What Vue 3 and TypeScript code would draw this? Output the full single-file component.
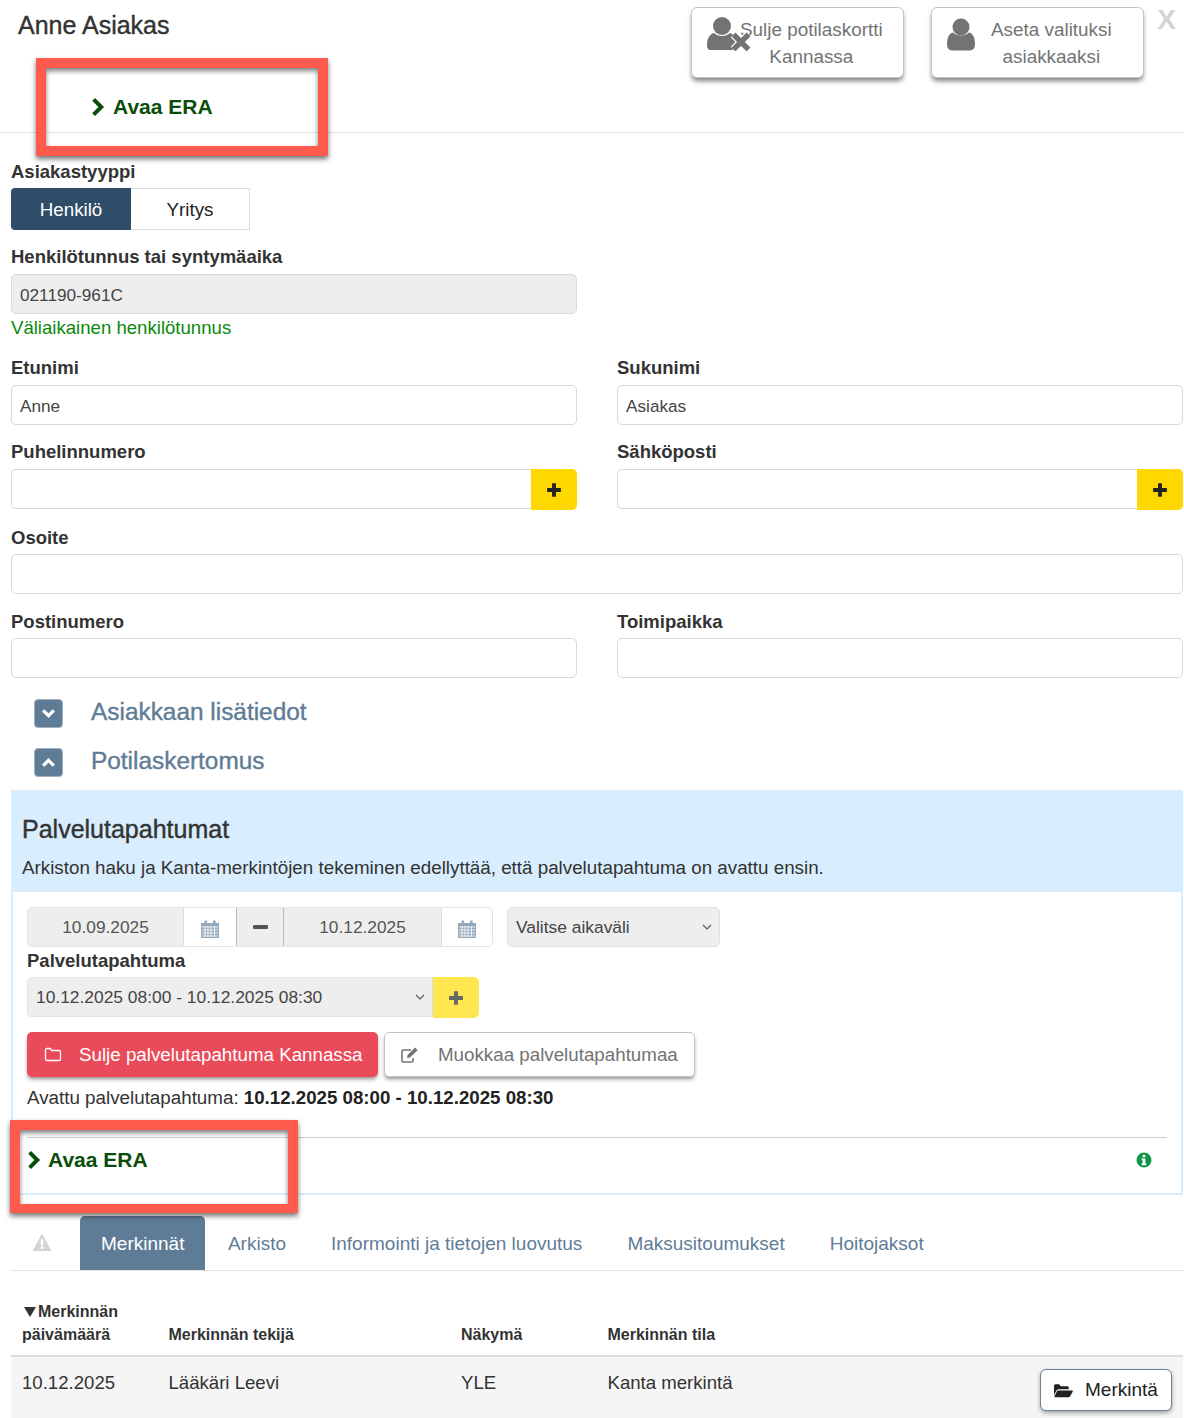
<script setup lang="ts">
const tabs: string[] = ['Arkisto', 'Informointi ja tietojen luovutus', 'Maksusitoumukset', 'Hoitojaksot']
</script>

<template>
  <div class="page">
    <header class="top">
      <div class="top-left">
        <h1 class="name">Anne Asiakas</h1>
        <a class="era era-top">
          <svg class="chev" viewBox="0 0 14 20"><path d="M3 3l7 7-7 7" fill="none" stroke="currentColor" stroke-width="3.6" /></svg>
          Avaa ERA
        </a>
      </div>
      <div class="top-actions">
        <button class="big-btn">
          <svg class="user-x" viewBox="0 0 44 34">
            <circle cx="15" cy="9" r="9" fill="#737373" />
            <path d="M0 28c0-7 3-11 7-12 2 2 5 3 8 3s6-1 8-3c3 1 5 3 6 6l-3 11H4c-3 0-4-2-4-5z" fill="#737373" />
            <path d="M26.500 17.500l15 15M41.500 17.500l-15 15" stroke="#fff" stroke-width="8" />
            <path d="M26.500 17.500l15 15M41.500 17.500l-15 15" stroke="#737373" stroke-width="5.400" />
          </svg>
          <span>Sulje potilaskortti<br />Kannassa</span>
        </button>
        <button class="big-btn">
          <svg class="user" viewBox="0 0 28 32">
            <circle cx="14" cy="8.500" r="8.500" fill="#737373" />
            <path d="M0 26c0-7 2-11 6-12 2 2 5 3 8 3s6-1 8-3c4 1 6 5 6 12 0 3-2 6-5 6H5c-3 0-5-3-5-6z" fill="#737373" />
          </svg>
          <span>Aseta valituksi<br />asiakkaaksi</span>
        </button>
        <span class="close-x">X</span>
      </div>
    </header>

    <section class="form">
      <label class="lbl lbl-first">Asiakastyyppi</label>
      <div class="toggle">
        <span class="tg on">Henkilö</span>
        <span class="tg">Yritys</span>
      </div>

      <label class="lbl lbl-hetu">Henkilötunnus tai syntymäaika</label>
      <div class="half">
        <div class="inp disabled">021190-961C</div>
      </div>
      <div class="green">Väliaikainen henkilötunnus</div>

      <div class="grid g1">
        <div><label class="lbl">Etunimi</label><div class="inp">Anne</div></div>
        <div><label class="lbl">Sukunimi</label><div class="inp">Asiakas</div></div>
      </div>
      <div class="grid g2">
        <div>
          <label class="lbl">Puhelinnumero</label>
          <div class="inp-add"><div class="inp grow"></div><span class="add"><svg viewBox="0 0 14 14"><path d="M7 1v12M1 7h12" stroke="#222" stroke-width="3.400" /></svg></span></div>
        </div>
        <div>
          <label class="lbl">Sähköposti</label>
          <div class="inp-add"><div class="inp grow"></div><span class="add"><svg viewBox="0 0 14 14"><path d="M7 1v12M1 7h12" stroke="#222" stroke-width="3.400" /></svg></span></div>
        </div>
      </div>
      <label class="lbl lbl-addr">Osoite</label>
      <div class="inp"></div>
      <div class="grid g3">
        <div><label class="lbl">Postinumero</label><div class="inp"></div></div>
        <div><label class="lbl">Toimipaikka</label><div class="inp"></div></div>
      </div>

      <div class="coll c1">
        <span class="coll-ic"><svg viewBox="0 0 14 10"><path d="M2 2l5 5 5-5" fill="none" stroke="#fff" stroke-width="3" /></svg></span>
        <span class="coll-t">Asiakkaan lisätiedot</span>
      </div>
      <div class="coll c2">
        <span class="coll-ic"><svg viewBox="0 0 14 10"><path d="M2 8l5-5 5 5" fill="none" stroke="#fff" stroke-width="3" /></svg></span>
        <span class="coll-t">Potilaskertomus</span>
      </div>

      <div class="panel">
        <div class="panel-head">
          <h2>Palvelutapahtumat</h2>
          <p>Arkiston haku ja Kanta-merkintöjen tekeminen edellyttää, että palvelutapahtuma on avattu ensin.</p>
        </div>
        <div class="panel-body">
          <div class="date-row">
            <div class="dates">
              <span class="d-val v1">10.09.2025</span>
              <span class="d-ic i1">
                <svg viewBox="0 0 18 18"><path d="M0 3h18v15H0z" fill="#93a9bd" /><rect x="3.500" y="0.500" width="2.600" height="4" fill="#93a9bd" /><rect x="12" y="0.500" width="2.600" height="4" fill="#93a9bd" /><path d="M1 7h16M1 10h16M1 13h16M1 16h16M4 6v11M7 6v11M10 6v11M13.500 6v11" stroke="#fff" stroke-width="0.800" fill="none" /></svg>
              </span>
              <span class="d-minus"><i></i></span>
              <span class="d-val v2">10.12.2025</span>
              <span class="d-ic i2">
                <svg viewBox="0 0 18 18"><path d="M0 3h18v15H0z" fill="#93a9bd" /><rect x="3.500" y="0.500" width="2.600" height="4" fill="#93a9bd" /><rect x="12" y="0.500" width="2.600" height="4" fill="#93a9bd" /><path d="M1 7h16M1 10h16M1 13h16M1 16h16M4 6v11M7 6v11M10 6v11M13.500 6v11" stroke="#fff" stroke-width="0.800" fill="none" /></svg>
              </span>
            </div>
            <div class="sel sel-range">
              <span>Valitse aikaväli</span>
              <svg class="caret" viewBox="0 0 10 6"><path d="M1 1l4 4 4-4" fill="none" stroke="#555" stroke-width="1.100" /></svg>
            </div>
          </div>

          <label class="lbl lbl-pt">Palvelutapahtuma</label>
          <div class="pt-row">
            <div class="sel sel-pt">
              <span>10.12.2025 08:00 - 10.12.2025 08:30</span>
              <svg class="caret" viewBox="0 0 10 6"><path d="M1 1l4 4 4-4" fill="none" stroke="#555" stroke-width="1.100" /></svg>
            </div>
            <span class="add add-soft"><svg viewBox="0 0 14 14"><path d="M7 1v12M1 7h12" stroke="#666" stroke-width="3.400" /></svg></span>
          </div>

          <div class="act-row">
            <button class="red-btn">
              <svg class="folder" viewBox="0 0 18 15"><path d="M1.500 3c0-1 .6-1.500 1.400-1.500h3.300l1.500 2h7.400c.8 0 1.400.6 1.400 1.400v7.200c0 .8-.6 1.400-1.400 1.400H2.900c-.8 0-1.400-.6-1.400-1.400z" fill="none" stroke="#fff" stroke-width="1.300" /></svg>
              Sulje palvelutapahtuma Kannassa
            </button>
            <button class="white-btn">
              <svg class="edit" viewBox="0 0 20 18"><path d="M13 12v2.500c0 .9-.7 1.500-1.500 1.500h-8C2.700 16 2 15.400 2 14.500v-9C2 4.700 2.700 4 3.500 4H11" fill="none" stroke="#737373" stroke-width="1.600" /><path d="M7 12l.6-3L15 1.600l2.600 2.600L10 11.500z" fill="#737373" /></svg>
              Muokkaa palvelutapahtumaa
            </button>
          </div>
          <p class="opened">Avattu palvelutapahtuma: <b>10.12.2025 08:00 - 10.12.2025 08:30</b></p>
          <hr class="rule" />
          <div class="era-row">
            <a class="era">
              <svg class="chev" viewBox="0 0 14 20"><path d="M3 3l7 7-7 7" fill="none" stroke="currentColor" stroke-width="3.600" /></svg>
              Avaa ERA
            </a>
            <svg class="info" viewBox="0 0 16 16"><circle cx="8" cy="8" r="7.500" fill="#0d9648" /><rect x="6.600" y="2.800" width="2.800" height="2.500" fill="#fff" /><path d="M5.600 6.500h3.800v5h1v1.700H5.600v-1.700h1V8.200h-1z" fill="#fff" /></svg>
          </div>
        </div>
      </div>

      <nav class="tabs">
        <span class="warn">
          <svg viewBox="0 0 20 18"><path d="M10 .5L19.500 18H.5z" fill="#d4d4d4" /><rect x="8.800" y="6" width="2.400" height="6.500" fill="#fff" /><rect x="8.800" y="13.500" width="2.400" height="2.500" fill="#fff" /></svg>
        </span>
        <span class="tab active">Merkinnät</span>
        <span v-for="t in tabs" :key="t" class="tab">{{ t }}</span>
      </nav>

      <div class="thead">
        <div class="c-date"><svg class="tri" viewBox="0 0 12 10"><path d="M0 0h12L6 10z" fill="#333" /></svg>Merkinnän päivämäärä</div>
        <div class="c-who">Merkinnän tekijä</div>
        <div class="c-view">Näkymä</div>
        <div class="c-state">Merkinnän tila</div>
      </div>
      <div class="trow">
        <div class="c-date">10.12.2025</div>
        <div class="c-who">Lääkäri Leevi</div>
        <div class="c-view">YLE</div>
        <div class="c-state">Kanta merkintä</div>
        <button class="mark-btn">
          <svg viewBox="0 0 19 15"><path d="M0 3c0-1 .6-1.700 1.500-1.700h3.700l1.500 2h6.500c.9 0 1.500.6 1.500 1.400V6.200H5c-1 0-2 .5-2.500 1.400L0 12z" fill="#222" /><path d="M4 7.500h14c.7 0 1 .5.700 1.200L16 13.500c-.3.500-.8.800-1.400.8H1.200c-.7 0-1-.5-.7-1.100L3 8.300c.2-.5.600-.8 1-.8z" fill="#222" /></svg>
          Merkintä
        </button>
      </div>
    </section>

    <div class="mark m1"></div>
    <div class="mark m2"></div>
  </div>
</template>

<style scoped>
.page {
  position: relative;
  width: 1184px;
  height: 1418px;
  overflow: hidden;
  background: #fff;
  font-family: "Liberation Sans", Arial, sans-serif;
  font-size: 18.8px;
  color: #222;
  box-sizing: border-box;
}
.top {
  height: 133px;
  box-sizing: border-box;
  border-bottom: 1px solid #e2e2e2;
  display: flex;
  justify-content: space-between;
}
.top-left { padding-left: 18px; }
.name {
  margin: 11px 0 0;
  font-size: 25px;
  line-height: 28px;
  font-weight: 400;
  color: #333;
  -webkit-text-stroke: 0.4px #333;
}
.era {
  display: inline-flex;
  align-items: center;
  gap: 7px;
  font-size: 21px;
  line-height: 24px;
  font-weight: 700;
  color: #0a4d0a;
}
.era-top { margin: 56px 0 0 72px; }
.chev { width: 16px; height: 22px; }
.top-actions {
  display: flex;
  align-items: flex-start;
  padding: 7px 8px 0 0;
}
.big-btn {
  position: relative;
  width: 213px;
  height: 71px;
  margin-right: 27px;
  padding: 0 0 0 27px;
  box-sizing: border-box;
  background: #fff;
  border: 1px solid #c4c4c4;
  border-radius: 6px;
  box-shadow: 0 4px 5px -1px rgba(0, 0, 0, 0.5);
  font: 18.9px/27px "Liberation Sans", Arial, sans-serif;
  color: #737373;
  text-align: center;
}
.big-btn span { display: block; }
.user-x { position: absolute; left: 15px; top: 9px; width: 44px; height: 34px; }
.user { position: absolute; left: 15px; top: 10px; width: 28px; height: 33px; }
.close-x {
  margin: 0 0 0 -14px;
  font-size: 28px;
  font-weight: 700;
  line-height: 26px;
  color: #d4d4d4;
}

.form { padding: 0 1px 0 11px; }
.lbl {
  display: block;
  font-size: 18.500px;
  line-height: 22px;
  font-weight: 700;
  color: #333;
}
.lbl-first { margin-top: 28px; }
.toggle { display: flex; margin-top: 5px; width: 239px; height: 42px; }
.tg {
  flex: 1;
  display: flex;
  align-items: center;
  justify-content: center;
  padding-top: 1px;
  box-sizing: border-box;
  border: 1px solid #ddd;
  border-left: 0;
  border-radius: 0;
}
.tg.on {
  flex: 0 0 120px;
  background: #2f4c68;
  color: #fff;
  border: 0;
  border-radius: 4px 0 0 4px;
}
.lbl-hetu { margin-top: 16px; }
.half { width: 566px; margin-top: 6px; }
.inp {
  height: 40px;
  box-sizing: border-box;
  padding: 0 8px;
  border: 1px solid #d8d8d8;
  border-radius: 5px;
  background: #fff;
  font-size: 17.200px;
  line-height: 40px;
  color: #444;
}
.inp.disabled { background: #eee; }
.green { margin-top: 3px; font-size: 18.600px; line-height: 22px; color: #0a8a0a; }
.grid {
  display: grid;
  grid-template-columns: 566px 566px;
  column-gap: 40px;
}
.grid .lbl { margin-bottom: 6px; }
.g1 { margin-top: 18px; }
.g2 { margin-top: 16px; }
.g3 { margin-top: 17px; }
.g3 .lbl { margin-bottom: 5px; }
.lbl-addr { margin: 17px 0 5px; }
.inp-add { display: flex; }
.grow { flex: 1; border-radius: 5px 0 0 5px; border-right: 0; }
.add {
  width: 46px;
  height: 41px;
  background: #ffd800;
  border-radius: 0 5px 5px 0;
  display: flex;
  align-items: center;
  justify-content: center;
}
.add svg { width: 16px; height: 16px; }
.add-soft { background: #ffe650; }
.coll { display: flex; align-items: center; padding-left: 23px; height: 29px; }
.c1 { margin-top: 21px; }
.c2 { margin-top: 20px; }
.coll-ic {
  width: 29px;
  height: 29px;
  box-sizing: border-box;
  background: #5f7c97;
  border: 1px solid #9fb0c0;
  border-radius: 4px;
  display: flex;
  align-items: center;
  justify-content: center;
}
.coll-ic svg { width: 15px; height: 11px; }
.coll-t {
  margin-left: 28px;
  margin-top: -4px;
  font-size: 24.400px;
  font-weight: 400;
  color: #5f7c97;
  -webkit-text-stroke: 0.4px #5f7c97;
}

.panel {
  margin-top: 13px;
  height: 405px;
  box-sizing: border-box;
  border: 2px solid #d8edfd;
  border-top: 0;
  display: flex;
  flex-direction: column;
}
.panel-head {
  margin: 0 -2px;
  height: 102px;
  background: #d8edfd;
  padding: 24px 11px 0;
  box-sizing: border-box;
}
.panel-head h2 {
  margin: 0;
  font-size: 25px;
  line-height: 30px;
  font-weight: 400;
  color: #333;
  -webkit-text-stroke: 0.4px #333;
}
.panel-head p { margin: 13px 0 0; line-height: 22px; color: #333; }
.panel-body { padding: 15px 14px 0; flex: 1; }
.date-row { display: flex; gap: 14px; }
.dates {
  display: flex;
  width: 466px;
  height: 40px;
  box-sizing: border-box;
  border: 1px solid #e4e4e4;
  border-radius: 5px;
  overflow: hidden;
  font-size: 17.300px;
}
.d-val {
  box-sizing: border-box;
  background: #eee;
  color: #555;
  display: flex;
  align-items: center;
  justify-content: center;
  border-right: 1px solid #ddd;
}
.v1 { width: 156px; }
.v2 { width: 158px; }
.d-ic { display: flex; align-items: center; justify-content: center; }
.i1 { width: 52px; }
.i2 { width: 50px; }
.d-ic svg { width: 18px; height: 18px; margin-top: 3px; }
.d-minus {
  width: 48px;
  box-sizing: border-box;
  background: #eee;
  border-left: 1px solid #bbb;
  border-right: 1px solid #bbb;
  display: flex;
  align-items: center;
  justify-content: center;
}
.d-minus i { width: 15px; height: 4px; background: #555; border-radius: 1px; }
.sel {
  height: 40px;
  box-sizing: border-box;
  background: #eee;
  border: 1px solid #e0e0e0;
  border-radius: 5px;
  padding: 0 8px;
  display: flex;
  align-items: center;
  justify-content: space-between;
  font-size: 17.400px;
  color: #444;
}
.caret { width: 10px; height: 6px; margin-right: -1px; }
.sel-range { width: 213px; }
.lbl-pt { margin-top: 3px; font-size: 18.500px; }
.pt-row { display: flex; margin-top: 5px; }
.sel-pt { width: 406px; border-radius: 5px 0 0 5px; padding-right: 8px; }
.act-row { display: flex; gap: 6px; margin-top: 14px; }
.red-btn, .white-btn {
  height: 45px;
  box-sizing: border-box;
  border-radius: 5px;
  font: 18.750px "Liberation Sans", Arial, sans-serif;
  display: flex;
  align-items: center;
  box-shadow: 0 3px 4px -1px rgba(0, 0, 0, 0.45);
  padding: 0;
}
.red-btn {
  width: 351px;
  background: #ea4b5b;
  border: 0;
  color: #fff;
  padding-left: 17px;
}
.folder { width: 18px; height: 15px; margin-right: 17px; }
.white-btn {
  width: 311px;
  background: #fff;
  border: 1px solid #c4c4c4;
  color: #737373;
  padding-left: 15px;
}
.edit { width: 20px; height: 18px; margin-right: 18px; }
.opened { margin: 10px 0 0; line-height: 22px; color: #333; }
.opened b { color: #222; font-size: 18.700px; }
.rule { margin: 28px 0 0; border: 0; border-top: 1px solid #ccc; }
.era-row {
  display: flex;
  justify-content: space-between;
  align-items: center;
  padding: 10px 15px 0 0;
}
.era-row .era { gap: 6px; margin-left: -1px; }
.info { width: 16px; height: 16px; }

.tabs {
  margin-top: 21px;
  height: 55px;
  box-sizing: border-box;
  border-bottom: 1px solid #e2e2e2;
  display: flex;
  align-items: stretch;
  font-size: 19px;
}
.warn { width: 69px; display: flex; align-items: center; padding-left: 21px; box-sizing: border-box; }
.warn svg { width: 20px; height: 18px; margin-top: -2px; }
.tab {
  display: flex;
  align-items: center;
  padding: 1px 22.500px 0;
  color: #5f7c97;
}
.tab.active {
  background: #5f7c97;
  color: #fff;
  border-radius: 5px 5px 0 0;
  padding: 1px 21px 0;
}
.thead, .trow { display: flex; position: relative; padding-left: 11px; }
.thead {
  height: 86px;
  box-sizing: border-box;
  align-items: flex-end;
  padding-bottom: 9px;
  font-size: 16px;
  line-height: 23px;
  font-weight: 700;
  color: #333;
  border-bottom: 2px solid #ddd;
}
.tri { width: 12px; height: 10px; margin: 0 2px 0 2px; }
.c-date { width: 146.500px; }
.c-who { width: 292.500px; }
.c-view { width: 146.500px; }
.trow {
  height: 62px;
  background: #f5f5f5;
  padding-top: 15px;
  box-sizing: border-box;
  line-height: 22px;
  font-size: 18.600px;
  color: #333;
}
.mark-btn {
  position: absolute;
  right: 11px;
  top: 12px;
  width: 132px;
  height: 42px;
  background: #fff;
  border: 1px solid #6a8198;
  border-radius: 6px;
  box-shadow: 0 2px 4px rgba(0, 0, 0, 0.35);
  font: 19px "Liberation Sans", Arial, sans-serif;
  color: #222;
  display: flex;
  align-items: center;
  gap: 12px;
  padding: 0 0 0 13px;
  box-sizing: border-box;
}
.mark-btn svg { width: 19px; height: 15px; }

.mark {
  position: absolute;
  box-sizing: border-box;
  border: 10px solid #fe5a4e;
  box-shadow: 0 3px 5px rgba(0, 0, 0, 0.55), inset 0 3px 5px rgba(0, 0, 0, 0.5);
  pointer-events: none;
}
.m1 { left: 36px; top: 58px; width: 292px; height: 98px; }
.m2 { left: 10px; top: 1120px; width: 288px; height: 93px; border-bottom-width: 9px; }
</style>
